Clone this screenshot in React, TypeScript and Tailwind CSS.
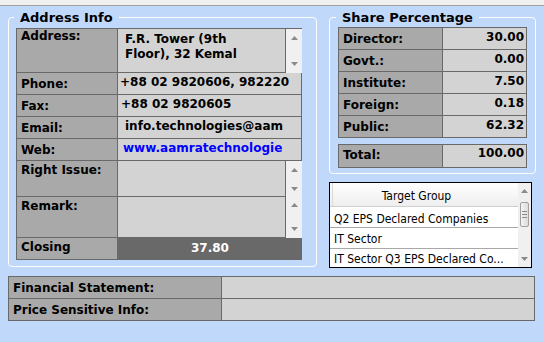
import React from "react";

const B = "border-[#696969]";
const LBL = `bg-[#a9a9a9] border-r border-b ${B} pl-[4px] whitespace-nowrap overflow-hidden`;
const VAL = `bg-[#d3d3d3] border-r border-b ${B} whitespace-nowrap overflow-hidden`;

function Up() {
  return (
    <svg width="7" height="4" viewBox="0 0 7 4">
      <path d="M3.5 0L7 4H0z" fill="#8a8a8a" />
    </svg>
  );
}
function Down() {
  return (
    <svg width="7" height="4" viewBox="0 0 7 4">
      <path d="M0 0H7L3.5 4z" fill="#8a8a8a" />
    </svg>
  );
}

function Scroll({ py }: { py: string }) {
  return (
    <div className={`w-[16px] bg-[#f0f0f0] flex flex-col items-center justify-between ${py}`}>
      <Up />
      <Down />
    </div>
  );
}

function Row({
  h,
  label,
  labelPt,
  children,
}: {
  h: string;
  label: string;
  labelPt: string;
  children: React.ReactNode;
}) {
  return (
    <div className={`flex ${h}`}>
      <div className={`w-[101px] ${LBL} ${labelPt}`}>{label}</div>
      {children}
    </div>
  );
}

function ShareRow({ label, value, h = "h-[22px]", lpt = "pt-[4px]", vpt = "pt-[2px]" }: { label: string; value: string; h?: string; lpt?: string; vpt?: string }) {
  return (
    <div className={`flex ${h}`}>
      <div className={`w-[104px] ${LBL} ${lpt}`}>{label}</div>
      <div className={`w-[84px] ${VAL} ${vpt} pr-[2px] text-right`}>{value}</div>
    </div>
  );
}

export default function App() {
  return (
    <div className="w-[544px] h-[342px] overflow-hidden bg-[#c0d8fa] text-[12px] leading-[14px] font-bold text-black font-[family-name:'DejaVu_Sans',sans-serif]">
      <div className="h-[6px] bg-[#f0f0f0] border-b border-[#a0a0a0]" />
      <div className="flex items-start mt-[4px] pl-[8px]">
        <fieldset className="w-[309px] border border-white rounded-[4px] px-[7px] pt-[3px] pb-[6px]">
          <legend className="ml-[-2px] px-[6px] text-[13px] leading-[15px]">Address Info</legend>
          <div className={`w-[286px] border-l border-t ${B}`}>
            <Row h="h-[44px]" label="Address:" labelPt="pt-0">
              <div className="flex w-[184px]">
                <div className={`w-[168px] bg-[#d3d3d3] border-r border-b ${B} pl-[7px] pt-[3px] leading-[15px]`}>
                  F.R. Tower (9th
                  <br />
                  Floor), 32 Kemal
                </div>
                <Scroll py="pt-[7px] pb-[7px]" />
              </div>
            </Row>
            <Row h="h-[22px]" label="Phone:" labelPt="pt-[4px]">
              <div className={`w-[184px] ${VAL} pt-[2px] pl-[2px]`}>+88 02 9820606, 982220</div>
            </Row>
            <Row h="h-[22px]" label="Fax:" labelPt="pt-[4px]">
              <div className={`w-[184px] ${VAL} pt-[2px] pl-[3px]`}>+88 02 9820605</div>
            </Row>
            <Row h="h-[22px]" label="Email:" labelPt="pt-[4px]">
              <div className={`w-[184px] ${VAL} pt-[2px] pl-[7px]`}>info.technologies@aam</div>
            </Row>
            <Row h="h-[22px]" label="Web:" labelPt="pt-[4px]">
              <div className={`w-[184px] ${VAL} pt-[2px] pl-[5px] text-[#0000ff]`}>www.aamratechnologie</div>
            </Row>
            <Row h="h-[36px]" label="Right Issue:" labelPt="pt-[2px]">
              <div className="flex w-[184px]">
                <div className={`w-[168px] bg-[#d3d3d3] border-r border-b ${B}`} />
                <Scroll py="pt-[7px] pb-[6px]" />
              </div>
            </Row>
            <Row h="h-[41px]" label="Remark:" labelPt="pt-[2px]">
              <div className="flex w-[184px]">
                <div className={`w-[168px] bg-[#d3d3d3] border-r border-b ${B}`} />
                <Scroll py="pt-[6px] pb-[7px]" />
              </div>
            </Row>
            <Row h="h-[22px]" label="Closing" labelPt="pt-[2px]">
              <div className={`w-[184px] bg-[#696969] border-b ${B} pt-[3px] text-center text-white`}>37.80</div>
            </Row>
          </div>
        </fieldset>

        <div className="ml-[12px] flex flex-col">
          <fieldset className="w-[205px] border border-white rounded-[4px] px-[8px] pt-[2px] pb-[5px]">
            <legend className="ml-[-2px] px-[6px] text-[13px] leading-[15px]">Share Percentage</legend>
            <div className={`w-[189px] border-l border-t ${B}`}>
              <ShareRow label="Director:" value="30.00" />
              <ShareRow label="Govt.:" value="0.00" />
              <ShareRow label="Institute:" value="7.50" />
              <ShareRow label="Foreign:" value="0.18" />
              <ShareRow label="Public:" value="62.32" />
            </div>
            <div className={`w-[189px] mt-[6px] border-l border-t ${B}`}>
              <ShareRow label="Total:" value="100.00" h="h-[23px]" lpt="pt-[3px]" vpt="pt-[1px]" />
            </div>
          </fieldset>

          <div className="mt-[8px] w-[203px] h-[86px] border border-black bg-white flex font-normal font-[family-name:'DejaVu_Sans_Condensed','Liberation_Sans',sans-serif]">
            <div className="flex-1 flex flex-col overflow-hidden">
              <div className="h-[24px] shrink-0 bg-gradient-to-b from-white to-[#eeeeee] border-b border-[#d0d0d0] flex">
                <div className="ml-[2px] w-[168px] border-l border-[#d8d8d8] text-center pt-[6px]">Target Group</div>
              </div>
              <div className="h-[21px] shrink-0 border-b border-[#a8a8a8] pl-[4px] pt-[5px] whitespace-nowrap">Q2 EPS Declared Companies</div>
              <div className="h-[21px] shrink-0 border-b border-[#a8a8a8] pl-[4px] pt-[4px] whitespace-nowrap">IT Sector</div>
              <div className="h-[18px] shrink-0 pl-[4px] pt-[3px] whitespace-nowrap">IT Sector Q3 EPS Declared Co...</div>
            </div>
            <div className="w-[13px] bg-[#f0f0f0] flex flex-col items-center pt-[6px] pb-[6px]">
              <Up />
              <div className="mt-[9px] w-[9px] h-[25px] border border-[#a0a0a0] rounded-[2px] bg-gradient-to-r from-[#f4f4f4] to-[#dcdcdc] flex flex-col items-center justify-center gap-[2px]">
                <div className="w-[5px] h-px bg-[#8a8a8a]" />
                <div className="w-[5px] h-px bg-[#8a8a8a]" />
                <div className="w-[5px] h-px bg-[#8a8a8a]" />
              </div>
              <div className="flex-1" />
              <Down />
            </div>
          </div>
        </div>
      </div>

      <div className={`ml-[8px] mt-[8px] w-[527px] border-l border-t ${B}`}>
        <div className="flex h-[22px]">
          <div className={`w-[213px] ${LBL} pt-[4px]`}>Financial Statement:</div>
          <div className={`w-[313px] ${VAL}`} />
        </div>
        <div className="flex h-[22px]">
          <div className={`w-[213px] ${LBL} pt-[4px]`}>Price Sensitive Info:</div>
          <div className={`w-[313px] ${VAL}`} />
        </div>
      </div>
    </div>
  );
}
